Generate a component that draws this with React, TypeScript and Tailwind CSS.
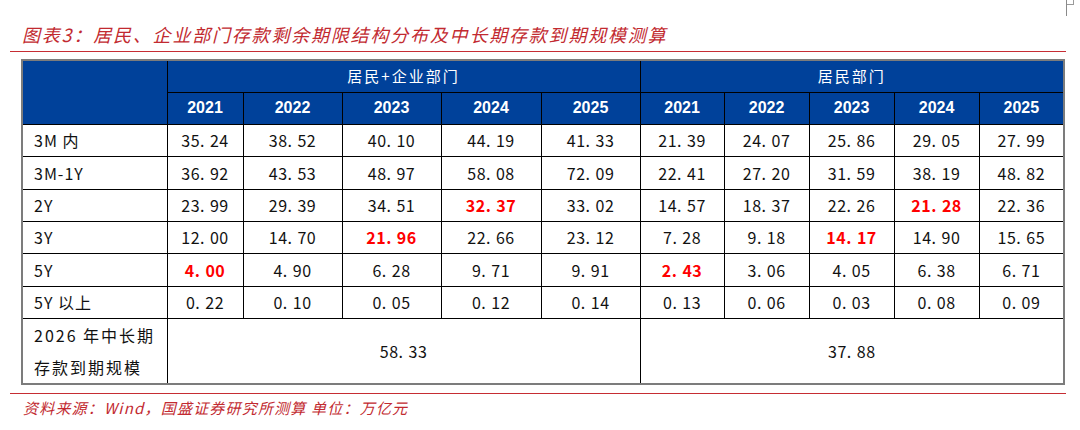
import React from "react";

const cjk = '"Noto Sans CJK SC", "Noto Sans", sans-serif';

type Cell = { v: string; hot?: boolean };

const rows: { label: string; cells: Cell[] }[] = [
  {
    label: "3M 内",
    cells: ["35.24", "38.52", "40.10", "44.19", "41.33", "21.39", "24.07", "25.86", "29.05", "27.99"].map((v) => ({ v })),
  },
  {
    label: "3M-1Y",
    cells: ["36.92", "43.53", "48.97", "58.08", "72.09", "22.41", "27.20", "31.59", "38.19", "48.82"].map((v) => ({ v })),
  },
  {
    label: "2Y",
    cells: [
      { v: "23.99" }, { v: "29.39" }, { v: "34.51" }, { v: "32.37", hot: true }, { v: "33.02" },
      { v: "14.57" }, { v: "18.37" }, { v: "22.26" }, { v: "21.28", hot: true }, { v: "22.36" },
    ],
  },
  {
    label: "3Y",
    cells: [
      { v: "12.00" }, { v: "14.70" }, { v: "21.96", hot: true }, { v: "22.66" }, { v: "23.12" },
      { v: "7.28" }, { v: "9.18" }, { v: "14.17", hot: true }, { v: "14.90" }, { v: "15.65" },
    ],
  },
  {
    label: "5Y",
    cells: [
      { v: "4.00", hot: true }, { v: "4.90" }, { v: "6.28" }, { v: "9.71" }, { v: "9.91" },
      { v: "2.43", hot: true }, { v: "3.06" }, { v: "4.05" }, { v: "6.38" }, { v: "6.71" },
    ],
  },
  {
    label: "5Y 以上",
    cells: ["0.22", "0.10", "0.05", "0.12", "0.14", "0.13", "0.06", "0.03", "0.08", "0.09"].map((v) => ({ v })),
  },
];

const years = ["2021", "2022", "2023", "2024", "2025"];
const widths = [145, 76, 99, 99, 100, 99, 84, 85, 85, 85, 85];

// the source draws the decimal point wide, like "35. 24"
function Num({ v }: { v: string }) {
  const [a, b] = v.split(".");
  return (
    <>
      {a}.<span className="ml-[5px]">{b}</span>
    </>
  );
}

function App() {
  return (
    <div className="relative w-[1080px] h-[430px] bg-white overflow-hidden" style={{ fontFamily: cjk }}>
      {/* page corner mark */}
      <div className="absolute left-[1066px] top-0 w-[8px] h-[5px] border border-[#9a9a9a] border-t-0" />
      <div className="absolute left-[1066px] top-0 w-px h-[16px] bg-[#8a8a8a]" />

      <div className="pl-[22px] pt-[22px] h-[50px] text-[18px] leading-[24px] italic tracking-[1.8px] text-[#c22a30]">
        图表3：居民、企业部门存款剩余期限结构分布及中长期存款到期规模测算
      </div>
      <div className="ml-[10px] mt-px w-[1056px] h-px bg-[#c62d33]" />

      <div className="pl-[21px] pt-[7px]">
        <table className="table-fixed border-collapse border-2 border-[#7c7c7c]" style={{ width: 1042 }}>
          <colgroup>
            {widths.map((w, i) => (
              <col key={i} style={{ width: w }} />
            ))}
          </colgroup>
          <thead>
            <tr className="h-[32px] bg-[#00419a] text-white">
              <th rowSpan={2} className="border border-black" />
              <th colSpan={5} className="border border-black text-[15px] font-normal tracking-[2px]">
                居民+企业部门
              </th>
              <th colSpan={5} className="border border-black text-[15px] font-normal tracking-[2px]">
                居民部门
              </th>
            </tr>
            <tr className="h-[32px] bg-[#00419a] text-white">
              {[...years, ...years].map((y, i) => (
                <th
                  key={i}
                  className="border border-black text-[16px] font-bold"
                  style={{ fontFamily: '"Liberation Sans", Arial, sans-serif' }}
                >
                  {y}
                </th>
              ))}
            </tr>
          </thead>
          <tbody className="text-[16px] text-[#111]">
            {rows.map((r, i) => (
              <tr key={r.label} className={i === 1 || i === 4 ? "h-[33px]" : "h-[32px]"}>
                <td className="border border-black pl-[11px] tracking-[1px]">{r.label}</td>
                {r.cells.map((c, j) => (
                  <td
                    key={j}
                    className={
                      "border border-black text-center tracking-[0.5px] " +
                      (c.hot ? "text-[#ff0000] font-bold" : "")
                    }
                  >
                    <Num v={c.v} />
                  </td>
                ))}
              </tr>
            ))}
            <tr className="h-[64px]">
              <td className="border border-black pl-[11px] leading-[32px] tracking-[2px]">
                2026 年中长期
                <br />
                存款到期规模
              </td>
              <td colSpan={5} className="border border-black text-center tracking-[0.5px]">
                <Num v="58.33" />
              </td>
              <td colSpan={5} className="border border-black text-center tracking-[0.5px]">
                <Num v="37.88" />
              </td>
            </tr>
          </tbody>
        </table>
      </div>

      <div className="ml-[10px] mt-[8px] w-[1056px] h-px bg-[#c62d33]" />
      <div className="pl-[23px] pt-[3px] text-[15px] leading-[22px] italic tracking-[1.2px] text-[#c22a30]">
        资料来源：Wind，国盛证券研究所测算 单位：万亿元
      </div>
    </div>
  );
}

export default App;
